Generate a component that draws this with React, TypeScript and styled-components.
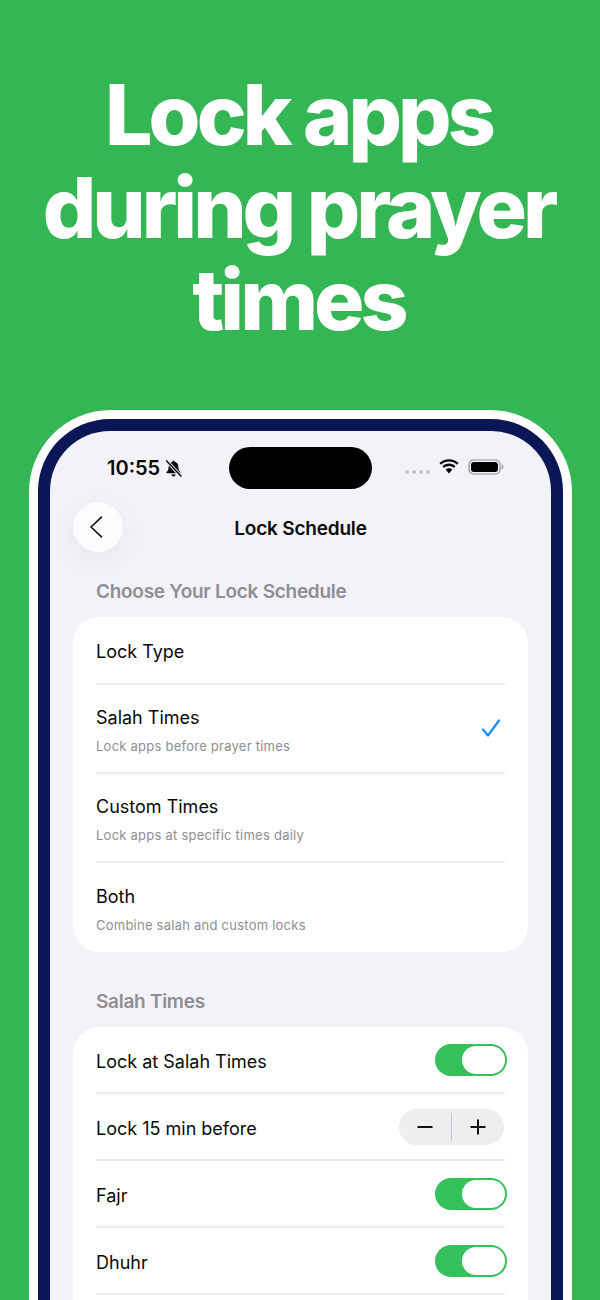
import React from "react";
import styled, { createGlobalStyle } from "styled-components";

const GlobalStyle = createGlobalStyle`
  html, body {
    margin: 0;
    padding: 0;
    background: #35b654;
  }
  * {
    box-sizing: border-box;
  }
`;

const lockOptions = [
  { title: "Salah Times", hint: "Lock apps before prayer times", checked: true },
  { title: "Custom Times", hint: "Lock apps at specific times daily", checked: false },
  { title: "Both", hint: "Combine salah and custom locks", checked: false },
];

const Toggle = () => (
  <ToggleTrack>
    <ToggleKnob />
  </ToggleTrack>
);

const BellOff = () => (
  <svg width="19" height="19" viewBox="0 0 18 18" fill="none">
    <path
      d="M9 1.6c-.7 0-1.2.5-1.2 1.1C5.6 3.3 4.4 5.1 4.4 7.4c0 3-1 4.1-2 5.2-.3.4-.1 1 .5 1h12.2c.6 0 .8-.6.5-1-1-1.100-2-2.200-2-5.200 0-2.300-1.200-4.100-3.400-4.700 0-.6-.5-1.100-1.200-1.100z"
      fill="#0a0a0a"
    />
    <path d="M7 14.600a2 2 0 0 0 4 0z" fill="#0a0a0a" />
    <path d="M2.500 1.800l13.500 14.400" stroke="#f2f2f8" strokeWidth="3.200" />
    <path d="M2.500 1.800l13.500 14.400" stroke="#0a0a0a" strokeWidth="1.400" strokeLinecap="round" />
  </svg>
);

const Wifi = () => (
  <svg width="22" height="17" viewBox="0 0 22 16" fill="#000">
    <path d="M11 3.100c3.100 0 5.900 1.200 8 3.200l1.500-1.700C18 2.200 14.700.700 11 .700S4 2.200 1.500 4.600L3 6.300c2.100-2 4.900-3.200 8-3.200z" />
    <path d="M11 7.500c1.900 0 3.600.7 4.900 1.900l1.600-1.700C15.800 6.100 13.500 5.100 11 5.100S6.200 6.100 4.500 7.700l1.600 1.700c1.300-1.200 3-1.900 4.900-1.900z" />
    <path d="M11 9.700c-1.300 0-2.400.5-3.300 1.300L11 15l3.300-4c-.9-.8-2-1.300-3.300-1.300z" />
  </svg>
);

const Battery = () => (
  <svg width="36" height="16" viewBox="0 0 36 16" fill="none">
    <rect x="1" y="1" width="31" height="14" rx="4.500" stroke="#8e8e8e" strokeWidth="1.200" />
    <rect x="3" y="3" width="27" height="10" rx="3" fill="#000" />
    <path d="M33.800 5.500c1 .3 1.600 1.300 1.600 2.500s-.6 2.200-1.600 2.500z" fill="#9a9a9a" />
  </svg>
);

const CheckMark = () => (
  <svg width="20" height="18" viewBox="0 0 20 18" fill="none">
    <path
      d="M2 10.500l5 6L18 1.500"
      stroke="#1b8cf0"
      strokeWidth="2.200"
      strokeLinecap="round"
      strokeLinejoin="round"
    />
  </svg>
);

export default function App() {
  return (
    <Page>
      <GlobalStyle />
      <Headline>
        Lock apps
        <br />
        during prayer
        <br />
        times
      </Headline>
      <PhoneFrame>
        <Screen>
          <StatusBar>
            <StatusLeft>
              <Clock>10:55</Clock>
              <BellOff />
            </StatusLeft>
            <Island />
            <StatusRight>
              <SignalDots>
                <i />
                <i />
                <i />
                <i />
              </SignalDots>
              <Wifi />
              <Battery />
            </StatusRight>
          </StatusBar>

          <NavBar>
            <BackButton>
              <svg width="14" height="22" viewBox="0 0 14 22" fill="none">
                <path
                  d="M12.500 1.200L2 11l10.500 9.800"
                  stroke="#111"
                  strokeWidth="1.600"
                  strokeLinecap="round"
                  strokeLinejoin="round"
                />
              </svg>
            </BackButton>
            <NavTitle>Lock Schedule</NavTitle>
            <span />
          </NavBar>

          <SectionTitle>Choose Your Lock Schedule</SectionTitle>
          <Card>
            <HeaderRow>
              <RowLabel>Lock Type</RowLabel>
            </HeaderRow>
            {lockOptions.map((option) => (
              <OptionRow key={option.title}>
                <div>
                  <RowLabel>{option.title}</RowLabel>
                  <RowHint>{option.hint}</RowHint>
                </div>
                {option.checked && <CheckMark />}
              </OptionRow>
            ))}
          </Card>

          <SectionTitle>Salah Times</SectionTitle>
          <Card $runsOff>
            <PlainRow>
              <RowLabel>Lock at Salah Times</RowLabel>
              <Toggle />
            </PlainRow>
            <PlainRow>
              <RowLabel>Lock 15 min before</RowLabel>
              <Stepper>
                <StepperButton>
                  <svg width="16" height="16" viewBox="0 0 16 16">
                    <path d="M.5 8h15" stroke="#111" strokeWidth="2" />
                  </svg>
                </StepperButton>
                <StepperButton>
                  <svg width="16" height="16" viewBox="0 0 16 16">
                    <path d="M.5 8h15M8 .5v15" stroke="#111" strokeWidth="2" />
                  </svg>
                </StepperButton>
              </Stepper>
            </PlainRow>
            <PlainRow>
              <RowLabel>Fajr</RowLabel>
              <Toggle />
            </PlainRow>
            <PlainRow>
              <RowLabel>Dhuhr</RowLabel>
              <Toggle />
            </PlainRow>
          </Card>
        </Screen>
      </PhoneFrame>
    </Page>
  );
}

const Page = styled.div`
  width: 600px;
  height: 1300px;
  overflow: hidden;
  background: #35b654;
  font-family: Inter, "Liberation Sans", sans-serif;
  display: flex;
  flex-direction: column;
  align-items: center;
`;

const Headline = styled.h1`
  margin: 0;
  padding: 69px 3px 0 0;
  height: 410px;
  flex: none;
  width: 100%;
  color: #fff;
  font-size: 84px;
  font-weight: 800;
  line-height: 92.500px;
  letter-spacing: -3.950px;
  text-align: center;
  white-space: nowrap;
`;

const PhoneFrame = styled.div`
  width: 543px;
  flex: none;
  margin-left: 1px;
  padding: 9px 9px 0;
  background: #fff;
  border-radius: 82px 82px 0 0;
`;

const Screen = styled.div`
  height: 900px;
  border: solid #0b1657;
  border-width: 12px 12px 0;
  border-radius: 72px 72px 0 0;
  background: #f2f2f8;
  padding: 0 11px;
  overflow: hidden;
`;

const StatusBar = styled.div`
  display: grid;
  grid-template-columns: 1fr 143px 1fr;
  align-items: center;
  padding-top: 16px;
  height: 58px;
`;

const StatusLeft = styled.div`
  display: flex;
  align-items: center;
  gap: 4px;
  padding-left: 46px;
`;

const Clock = styled.span`
  font-size: 20px;
  font-weight: 600;
  color: #0a0a0a;
  letter-spacing: 0;
`;

const Island = styled.div`
  height: 42px;
  border-radius: 21px;
  background: #000;
`;

const StatusRight = styled.div`
  display: flex;
  align-items: center;
  justify-content: flex-end;
  gap: 8px;
  padding-right: 36px;
  margin-top: -3px;
`;

const SignalDots = styled.div`
  display: flex;
  gap: 3px;
  margin-top: 10px;

  i {
    width: 4px;
    height: 4px;
    border-radius: 50%;
    background: #c4c4c8;
  }
`;

const NavBar = styled.div`
  display: grid;
  grid-template-columns: 50px 1fr 50px;
  align-items: center;
  margin-top: 13px;
  padding: 0 12px;
`;

const BackButton = styled.button`
  width: 50px;
  height: 50px;
  padding: 0 4px 0 0;
  border: none;
  border-radius: 50%;
  background: #fbfbfd;
  box-shadow: 0 8px 28px rgba(0, 0, 0, 0.06);
  display: flex;
  align-items: center;
  justify-content: center;
`;

const NavTitle = styled.div`
  text-align: center;
  font-size: 19px;
  font-weight: 600;
  letter-spacing: -0.200px;
  color: #0a0a0a;
  margin-top: 3px;
`;

const SectionTitle = styled.h2`
  margin: 28px 0 0;
  padding-left: 35px;
  height: 37px;
  font-size: 19px;
  line-height: 24px;
  font-weight: 600;
  letter-spacing: -0.280px;
  color: #8e8e93;
  & ~ & {
    margin-top: 38px;
  }
`;

const Card = styled.div<{ $runsOff?: boolean }>`
  margin: 0 12px;
  padding: 0 23px ${(p) => (p.$runsOff ? "40px" : "0")};
  background: #fff;
  border-radius: 26px;
`;

const PlainRow = styled.div`
  height: 67px;
  display: flex;
  align-items: center;
  justify-content: space-between;
  border-bottom: 2px solid #ededf0;
`;

const HeaderRow = styled(PlainRow)`
  height: 68px;
`;

const OptionRow = styled(PlainRow)`
  height: 89px;
  padding-right: 4px;
  padding-bottom: 1px;
  &:last-child {
    border-bottom: none;
  }
`;

const RowLabel = styled.div`
  font-size: 18px;
  line-height: 24px;
  padding-top: 4px;
  box-sizing: content-box;
  color: #0a0a0a;
  letter-spacing: 0;
`;

const RowHint = styled.div`
  margin-top: 8px;
  font-size: 13px;
  line-height: 16px;
  color: #8e8e93;
  letter-spacing: 0.240px;
`;

const ToggleTrack = styled.div`
  width: 72px;
  height: 32px;
  margin-right: -2px;
  padding: 2px;
  border-radius: 16px;
  background: #34c05a;
  display: flex;
  justify-content: flex-end;
`;

const ToggleKnob = styled.div`
  width: 43px;
  height: 28px;
  border-radius: 14px;
  background: #fff;
`;

const Stepper = styled.div`
  width: 105px;
  height: 36px;
  margin-right: 1px;
  border-radius: 18px;
  background: #eeeef0;
  display: flex;
  align-items: center;
`;

const StepperButton = styled.div`
  flex: 1;
  height: 28px;
  display: flex;
  align-items: center;
  justify-content: center;
  & + & {
    border-left: 1px solid #c8c8cc;
  }
`;
